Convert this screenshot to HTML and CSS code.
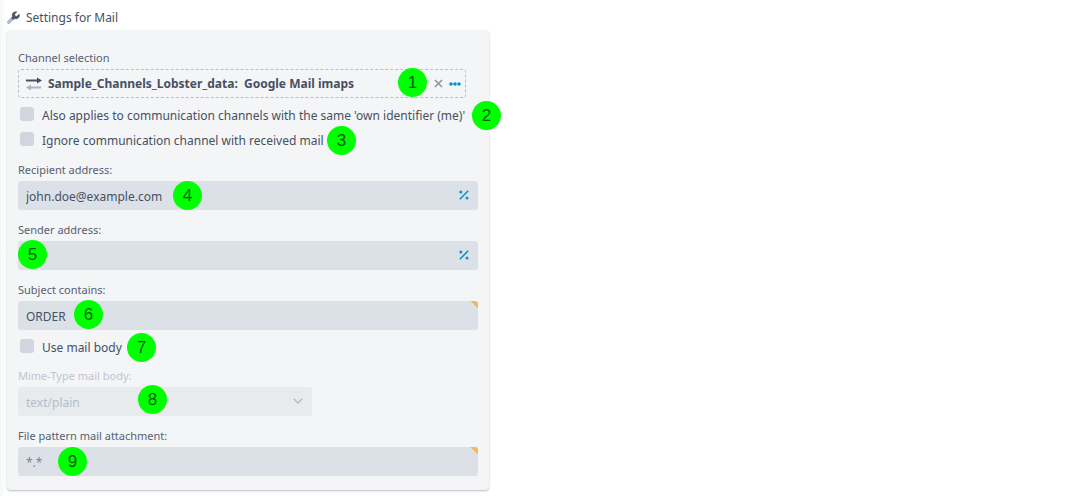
FILE: index.html
```html
<!DOCTYPE html>
<html lang="en">
<head>
<meta charset="utf-8">
<meta name="viewport" content="width=device-width, initial-scale=1">
<title>Settings for Mail</title>
<link rel="stylesheet" href="styles.css">
</head>
<body>
<main class="page">
  <header class="heading">
    <svg class="wrench" viewBox="0 0 14 14" aria-hidden="true">
      <path d="M1.9 12.100 6.800 7.200" stroke="#b4bac4" stroke-width="3.600" stroke-linecap="round"/>
      <path d="M10.800.9 8.300 3.400l.4 1.900 1.900.4 2.600-2.500c.6 1.900 0 3.700-1.500 4.700-1.200.8-2.600.8-3.800.3L6.600 9.400 4.700 7.500 6 6.200C5.300 4.800 5.500 3.100 6.500 2 7.600.8 9.200.4 10.800.9z" fill="#4a566b" stroke="#4a566b" stroke-width=".5"/>
    </svg>
    <h1 class="title">Settings for Mail</h1>
  </header>

  <form class="card">
    <div class="field">
      <span class="label" id="channel-label">Channel selection</span>
      <div class="channel" role="group" aria-labelledby="channel-label">
        <svg class="arrows" viewBox="0 0 16 14" aria-hidden="true">
          <path d="M0 3.500h12" stroke="#465166" stroke-width="2"/>
          <path d="M11 .5 16 3.500 11 6.500z" fill="#465166"/>
          <path d="M4 10.500h11" stroke="#afb5bf" stroke-width="2"/>
          <path d="M5 7.500 0 10.500 5 13.500z" fill="#afb5bf"/>
        </svg>
        <span class="channel-name">Sample_Channels_Lobster_data: &nbsp;Google Mail imaps</span>
        <button class="icon-button" type="button" aria-label="Clear">
          <svg class="cross" viewBox="0 0 9 9"><path d="M1 1l7 7M8 1 1 8" stroke="#9299a5" stroke-width="1.700"/></svg>
        </button>
        <button class="icon-button" type="button" aria-label="More">
          <svg class="dots" viewBox="0 0 12 4"><g fill="#0894c4"><circle cx="2" cy="2" r="1.800"/><circle cx="6" cy="2" r="1.800"/><circle cx="10" cy="2" r="1.800"/></g></svg>
        </button>
      </div>
    </div>

    <div class="checks checks-spaced">
      <label class="check"><input class="box" type="checkbox">Also applies to communication channels with the same 'own identifier (me)'</label>
      <label class="check"><input class="box" type="checkbox">Ignore communication channel with received mail</label>
    </div>

    <div class="fields">
      <div class="field">
        <label class="label" for="recipient">Recipient address:</label>
        <div class="control">
          <input class="input" id="recipient" type="text" value="john.doe@example.com">
          <svg class="percent" viewBox="0 0 10 10" aria-hidden="true"><path d="M.8 9.200 9.200.8" stroke="#0894c4" stroke-width="1.600"/><circle cx="1.800" cy="2" r="1.500" fill="#0894c4"/><circle cx="8" cy="8" r="1.500" fill="#0894c4"/></svg>
        </div>
      </div>
      <div class="field">
        <label class="label" for="sender">Sender address:</label>
        <div class="control">
          <input class="input" id="sender" type="text">
          <svg class="percent" viewBox="0 0 10 10" aria-hidden="true"><path d="M.8 9.200 9.200.8" stroke="#0894c4" stroke-width="1.600"/><circle cx="1.800" cy="2" r="1.500" fill="#0894c4"/><circle cx="8" cy="8" r="1.500" fill="#0894c4"/></svg>
        </div>
      </div>
      <div class="field">
        <label class="label" for="subject">Subject contains:</label>
        <div class="control control-marked">
          <input class="input" id="subject" type="text" value="ORDER">
        </div>
      </div>
    </div>

    <div class="checks">
      <label class="check"><input class="box" type="checkbox">Use mail body</label>
    </div>

    <div class="fields">
      <div class="field field-disabled">
        <label class="label" for="mime">Mime-Type mail body:</label>
        <div class="control control-short">
          <select class="input" id="mime" disabled><option>text/plain</option></select>
          <svg class="chevron" viewBox="0 0 10 6" aria-hidden="true"><path d="M.7.7 5 5 9.300.7" fill="none" stroke="#b4bbc6" stroke-width="1.300"/></svg>
        </div>
      </div>
      <div class="field">
        <label class="label" for="pattern">File pattern mail attachment:</label>
        <div class="control control-marked">
          <input class="input input-soft" id="pattern" type="text" value="*.*">
        </div>
      </div>
    </div>

    <span class="badge badge-1">1</span>
    <span class="badge badge-2">2</span>
    <span class="badge badge-3">3</span>
    <span class="badge badge-4">4</span>
    <span class="badge badge-5">5</span>
    <span class="badge badge-6">6</span>
    <span class="badge badge-7">7</span>
    <span class="badge badge-8">8</span>
    <span class="badge badge-9">9</span>
  </form>
</main>
</body>
</html>
```
FILE: styles.css
```css
* { box-sizing: border-box; }

body {
  margin: 0;
  background: #fff;
  color: #465063;
  font-family: "Noto Sans", "Open Sans", sans-serif;
  font-size: 12px;
}

.page {
  max-width: 489px;
  padding: 4px 0 6px 7px;
  background: linear-gradient(to right, #f6f7f7, #fff 6px);
}

.heading {
  display: flex;
  align-items: center;
  gap: 6px;
  height: 26px;
}

.wrench { width: 13px; height: 13px; }

.title {
  margin: 0;
  font-size: 12px;
  font-weight: 400;
}

.card {
  position: relative;
  padding: 18px 11px 14px;
  border-radius: 4px;
  background: #f3f5f7;
  box-shadow: 0 1px 2px rgba(60, 70, 90, 0.35);
}

.fields {
  display: flex;
  flex-direction: column;
  gap: 10px;
}

.label {
  display: block;
  padding-bottom: 2px;
  font-size: 11px;
  line-height: 19px;
  color: #566072;
}

.channel {
  display: flex;
  align-items: center;
  gap: 6px;
  height: 29px;
  margin-right: 12px;
  padding: 0 4px 0 7px;
  border: 1px dashed #b9bfc9;
  border-radius: 3px;
}

.arrows { width: 16px; height: 14px; }

.channel-name {
  flex: 1;
  font-weight: 700;
  white-space: nowrap;
}

.icon-button {
  display: flex;
  padding: 0;
  border: 0;
  background: none;
}

.cross { width: 9px; height: 9px; }
.dots { width: 12px; height: 4px; }

.checks { margin: 5px 0 6px; }
.checks-spaced { margin-bottom: 7px; }

.check {
  display: flex;
  align-items: center;
  gap: 8px;
  height: 25px;
  padding-left: 2px;
  white-space: nowrap;
}

.box {
  appearance: none;
  width: 14px;
  height: 14px;
  margin: 0 0 4px;
  border-radius: 3px;
  background: #d1d6de;
}

.control { position: relative; }
.control-short { max-width: 294px; }

.input {
  display: block;
  appearance: none;
  width: 100%;
  height: 29px;
  padding: 2px 8px 0;
  border: 0;
  border-radius: 3px;
  background: #dce1e8;
  color: #465063;
  font: inherit;
}

.input-soft { color: #7b8494; }

.percent {
  position: absolute;
  top: 9px;
  right: 9px;
  width: 10px;
  height: 10px;
}

.control-marked::after {
  content: "";
  position: absolute;
  top: 0;
  right: 0;
  width: 8px;
  height: 7px;
  border-top-right-radius: 3px;
  background: linear-gradient(to top right, transparent 50%, #f0b862 50%);
}

.field-disabled .label { color: #c0c5cd; }

.field-disabled .input {
  background: #e7ebee;
  color: #b5bcc7;
  opacity: 1;
}

.chevron {
  position: absolute;
  top: 11px;
  right: 9px;
  width: 10px;
  height: 6px;
}

.badge {
  position: absolute;
  width: 29px;
  height: 29px;
  border-radius: 50%;
  background: #0f0;
  color: #065c06;
  font-family: "Liberation Sans", Arial, sans-serif;
  font-size: 17px;
  line-height: 29px;
  text-align: center;
}

.badge-1 { left: 391px; top: 38px; }
.badge-2 { left: 465px; top: 71px; }
.badge-3 { left: 320px; top: 96px; }
.badge-4 { left: 166px; top: 151px; }
.badge-5 { left: 11px; top: 210px; }
.badge-6 { left: 67px; top: 270px; }
.badge-7 { left: 120px; top: 303px; }
.badge-8 { left: 131px; top: 355px; }
.badge-9 { left: 51px; top: 417px; }
```
